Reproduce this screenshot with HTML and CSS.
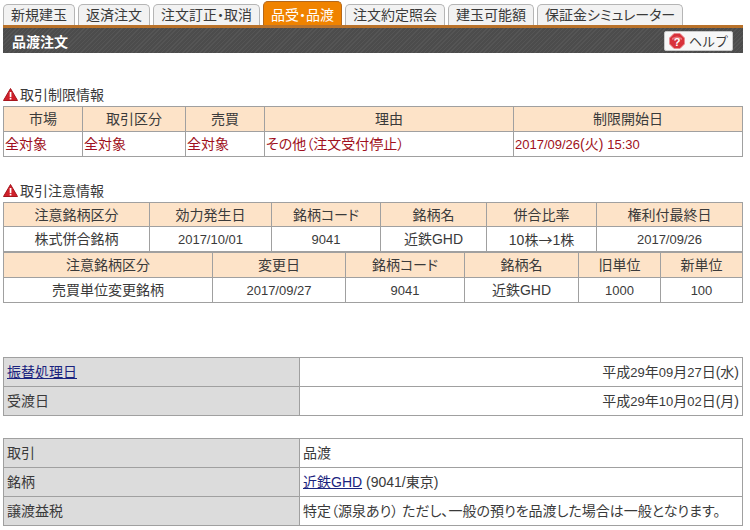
FILE: index.html
```html
<!DOCTYPE html>
<html lang="ja">
    <head>
        <meta charset="UTF-8" />
        <title>品渡注文</title>
        <link rel="stylesheet" href="styles.css">
    </head>
    <body>
        <div class="page">
            <ul class="tabs">
                <li>新規建玉</li>
                <li>返済注文</li>
                <li>注文訂正・取消</li>
                <li class="active">品受・品渡</li>
                <li>注文約定照会</li>
                <li>建玉可能額</li>
                <li>保証金シミュレーター</li>
            </ul>
            <div class="title-bar">
                <h1>品渡注文</h1>
                <button type="button" class="btn-help">
                    <svg width="16" height="16" viewBox="0 0 16 16">
                        <polygon points="5,0.5 11,0.5 15.5,5 15.5,11 11,15.5 5,15.5 0.5,11 0.5,5" fill="#d8313a" stroke="#e98a8e" />
                        <path d="M3 5 Q8 2 13 5 L13 7 Q8 4.5 3 7 Z" fill="#ea7278" />
                        <text x="8" y="12.5" text-anchor="middle" class="help-mark">?</text>
                    </svg>
                    ヘルプ
                </button>
            </div>

            <h2 class="notice notice-limit">
                <svg width="15" height="13" viewBox="0 0 15 13">
                    <polygon points="7.5,0.5 14.5,12.5 0.5,12.5" fill="#d0202a" stroke="#a5151d" stroke-linejoin="round" />
                    <rect x="6.7" y="4" width="1.7" height="5" fill="#fff" />
                    <rect x="6.7" y="9.8" width="1.7" height="1.7" fill="#fff" />
                </svg>
                取引制限情報
            </h2>
            <table class="info t-limit">
                <tr>
                    <th>市場</th>
                    <th>取引区分</th>
                    <th>売買</th>
                    <th>理由</th>
                    <th>制限開始日</th>
                </tr>
                <tr class="alert">
                    <td>全対象</td>
                    <td>全対象</td>
                    <td>全対象</td>
                    <td>その他（注文受付停止）</td>
                    <td><span class="num">2017/09/26</span>(火) <span class="num">15:30</span></td>
                </tr>
            </table>

            <h2 class="notice notice-caution">
                <svg width="15" height="13" viewBox="0 0 15 13">
                    <polygon points="7.5,0.5 14.5,12.5 0.5,12.5" fill="#d0202a" stroke="#a5151d" stroke-linejoin="round" />
                    <rect x="6.7" y="4" width="1.7" height="5" fill="#fff" />
                    <rect x="6.7" y="9.8" width="1.7" height="1.7" fill="#fff" />
                </svg>
                取引注意情報
            </h2>
            <table class="info t-merge">
                <tr>
                    <th>注意銘柄区分</th>
                    <th>効力発生日</th>
                    <th>銘柄コード</th>
                    <th>銘柄名</th>
                    <th>併合比率</th>
                    <th>権利付最終日</th>
                </tr>
                <tr>
                    <td>株式併合銘柄</td>
                    <td><span class="num">2017/10/01</span></td>
                    <td><span class="num">9041</span></td>
                    <td>近鉄GHD</td>
                    <td>10株<span class="arrow">→</span>1株</td>
                    <td><span class="num">2017/09/26</span></td>
                </tr>
            </table>
            <table class="info t-unit">
                <tr>
                    <th>注意銘柄区分</th>
                    <th>変更日</th>
                    <th>銘柄コード</th>
                    <th>銘柄名</th>
                    <th>旧単位</th>
                    <th>新単位</th>
                </tr>
                <tr>
                    <td>売買単位変更銘柄</td>
                    <td><span class="num">2017/09/27</span></td>
                    <td><span class="num">9041</span></td>
                    <td>近鉄GHD</td>
                    <td><span class="num">1000</span></td>
                    <td><span class="num">100</span></td>
                </tr>
            </table>

            <table class="detail detail-dates">
                <tr>
                    <th><a href="#">振替処理日</a></th>
                    <td class="right">平成<span class="num">29</span>年<span class="num">09</span>月<span class="num">27</span>日(水)</td>
                </tr>
                <tr>
                    <th>受渡日</th>
                    <td class="right">平成<span class="num">29</span>年<span class="num">10</span>月<span class="num">02</span>日(月)</td>
                </tr>
            </table>
            <table class="detail detail-order">
                <tr>
                    <th>取引</th>
                    <td>品渡</td>
                </tr>
                <tr>
                    <th>銘柄</th>
                    <td><a href="#">近鉄GHD</a> (9041/東京)</td>
                </tr>
                <tr>
                    <th>譲渡益税</th>
                    <td>特定（源泉あり） ただし、一般の預りを品渡した場合は一般となります。</td>
                </tr>
            </table>
        </div>
    </body>
</html>
```

FILE: styles.css
```css
* {
    padding: 0;
    margin: 0;
    box-sizing: border-box;
}
body {
    font-family: 'Liberation Sans', 'Noto Sans CJK JP', sans-serif;
    font-size: 14px;
    font-feature-settings: 'palt';
    background-color: #ffffff;
    color: #3a3a3a;
}
.page {
    width: 740px;
    margin-left: 3px;
    padding-top: 4px;
}
.tabs {
    display: flex;
    gap: 3px;
    list-style: none;
    height: 21px;
}
.tabs li {
    height: 21px;
    line-height: 20px;
    padding: 0 7px;
    background-color: #f2f2f2;
    border: 1px solid #b5b5b5;
    border-bottom: none;
    border-radius: 5px 5px 0 0;
    white-space: nowrap;
}
.tabs li.active {
    height: 24px;
    margin-top: -3px;
    padding-top: 3px;
    background-color: #f08300;
    border-color: #b5681a;
    color: #ffffff;
}
.title-bar {
    display: flex;
    justify-content: space-between;
    align-items: center;
    height: 28px;
    padding: 0 10px 0 9px;
    border-top: 3px solid #b9722a;
    background-color: #505050;
    background-image: repeating-linear-gradient(135deg, #555555 0, #555555 1px, #4c4c4c 1px, #4c4c4c 3px);
}
.title-bar h1 {
    font-size: 14px;
    font-weight: bold;
    color: #ffffff;
}
.btn-help {
    display: flex;
    align-items: center;
    gap: 4px;
    width: 69px;
    height: 20px;
    padding-left: 4px;
    font-family: inherit;
    font-size: 13px;
    font-feature-settings: normal;
    color: #3a3a3a;
    background-color: #f7f7f7;
    border: 1px solid #c8c8c8;
    border-radius: 2px;
}
.help-mark {
    font-family: 'Liberation Sans', sans-serif;
    font-size: 11px;
    font-weight: bold;
    fill: #ffffff;
}
.notice {
    display: flex;
    align-items: center;
    gap: 2px;
    height: 20px;
    font-size: 14px;
    font-weight: normal;
}
.notice-limit {
    margin-top: 31px;
    margin-bottom: 2px;
}
.notice-caution {
    margin-top: 23px;
    margin-bottom: 2px;
}
table {
    width: 100%;
    table-layout: fixed;
    border-collapse: collapse;
}
.info th,
.info td {
    height: 25px;
    border: 1px solid #a0a0a0;
    font-weight: normal;
    line-height: 16px;
    text-align: center;
    white-space: nowrap;
}
.info th {
    background-color: #fde3c8;
}
.info .alert td {
    text-align: left;
    color: #a01020;
    padding-left: 1px;
}
.num {
    font-size: 13px;
}
.arrow {
    font-family: 'Noto Sans CJK JP', sans-serif;
    font-feature-settings: normal;
}
.t-limit th:nth-child(1) { width: 79px; }
.t-limit th:nth-child(2) { width: 103px; }
.t-limit th:nth-child(3) { width: 79px; }
.t-limit th:nth-child(4) { width: 249px; }
.t-merge th { height: 24px; }
.t-merge th:nth-child(1) { width: 146px; }
.t-merge th:nth-child(2) { width: 122px; }
.t-merge th:nth-child(3) { width: 109px; }
.t-merge th:nth-child(4) { width: 106px; }
.t-merge th:nth-child(5) { width: 110px; }
.t-unit th:nth-child(1) { width: 209px; }
.t-unit th:nth-child(2) { width: 133px; }
.t-unit th:nth-child(3) { width: 119px; }
.t-unit th:nth-child(4) { width: 114px; }
.t-unit th:nth-child(5) { width: 82px; }
.detail th,
.detail td {
    height: 29px;
    border: 1px solid #a0a0a0;
    padding: 0 3px;
    font-weight: normal;
    line-height: 16px;
    text-align: left;
    white-space: nowrap;
}
.detail th {
    width: 296px;
    background-color: #dcdcdc;
}
.detail td.right {
    text-align: right;
}
.detail a {
    color: #1a237e;
}
.detail-dates {
    margin-top: 54px;
}
.detail-order {
    margin-top: 22px;
}
```
